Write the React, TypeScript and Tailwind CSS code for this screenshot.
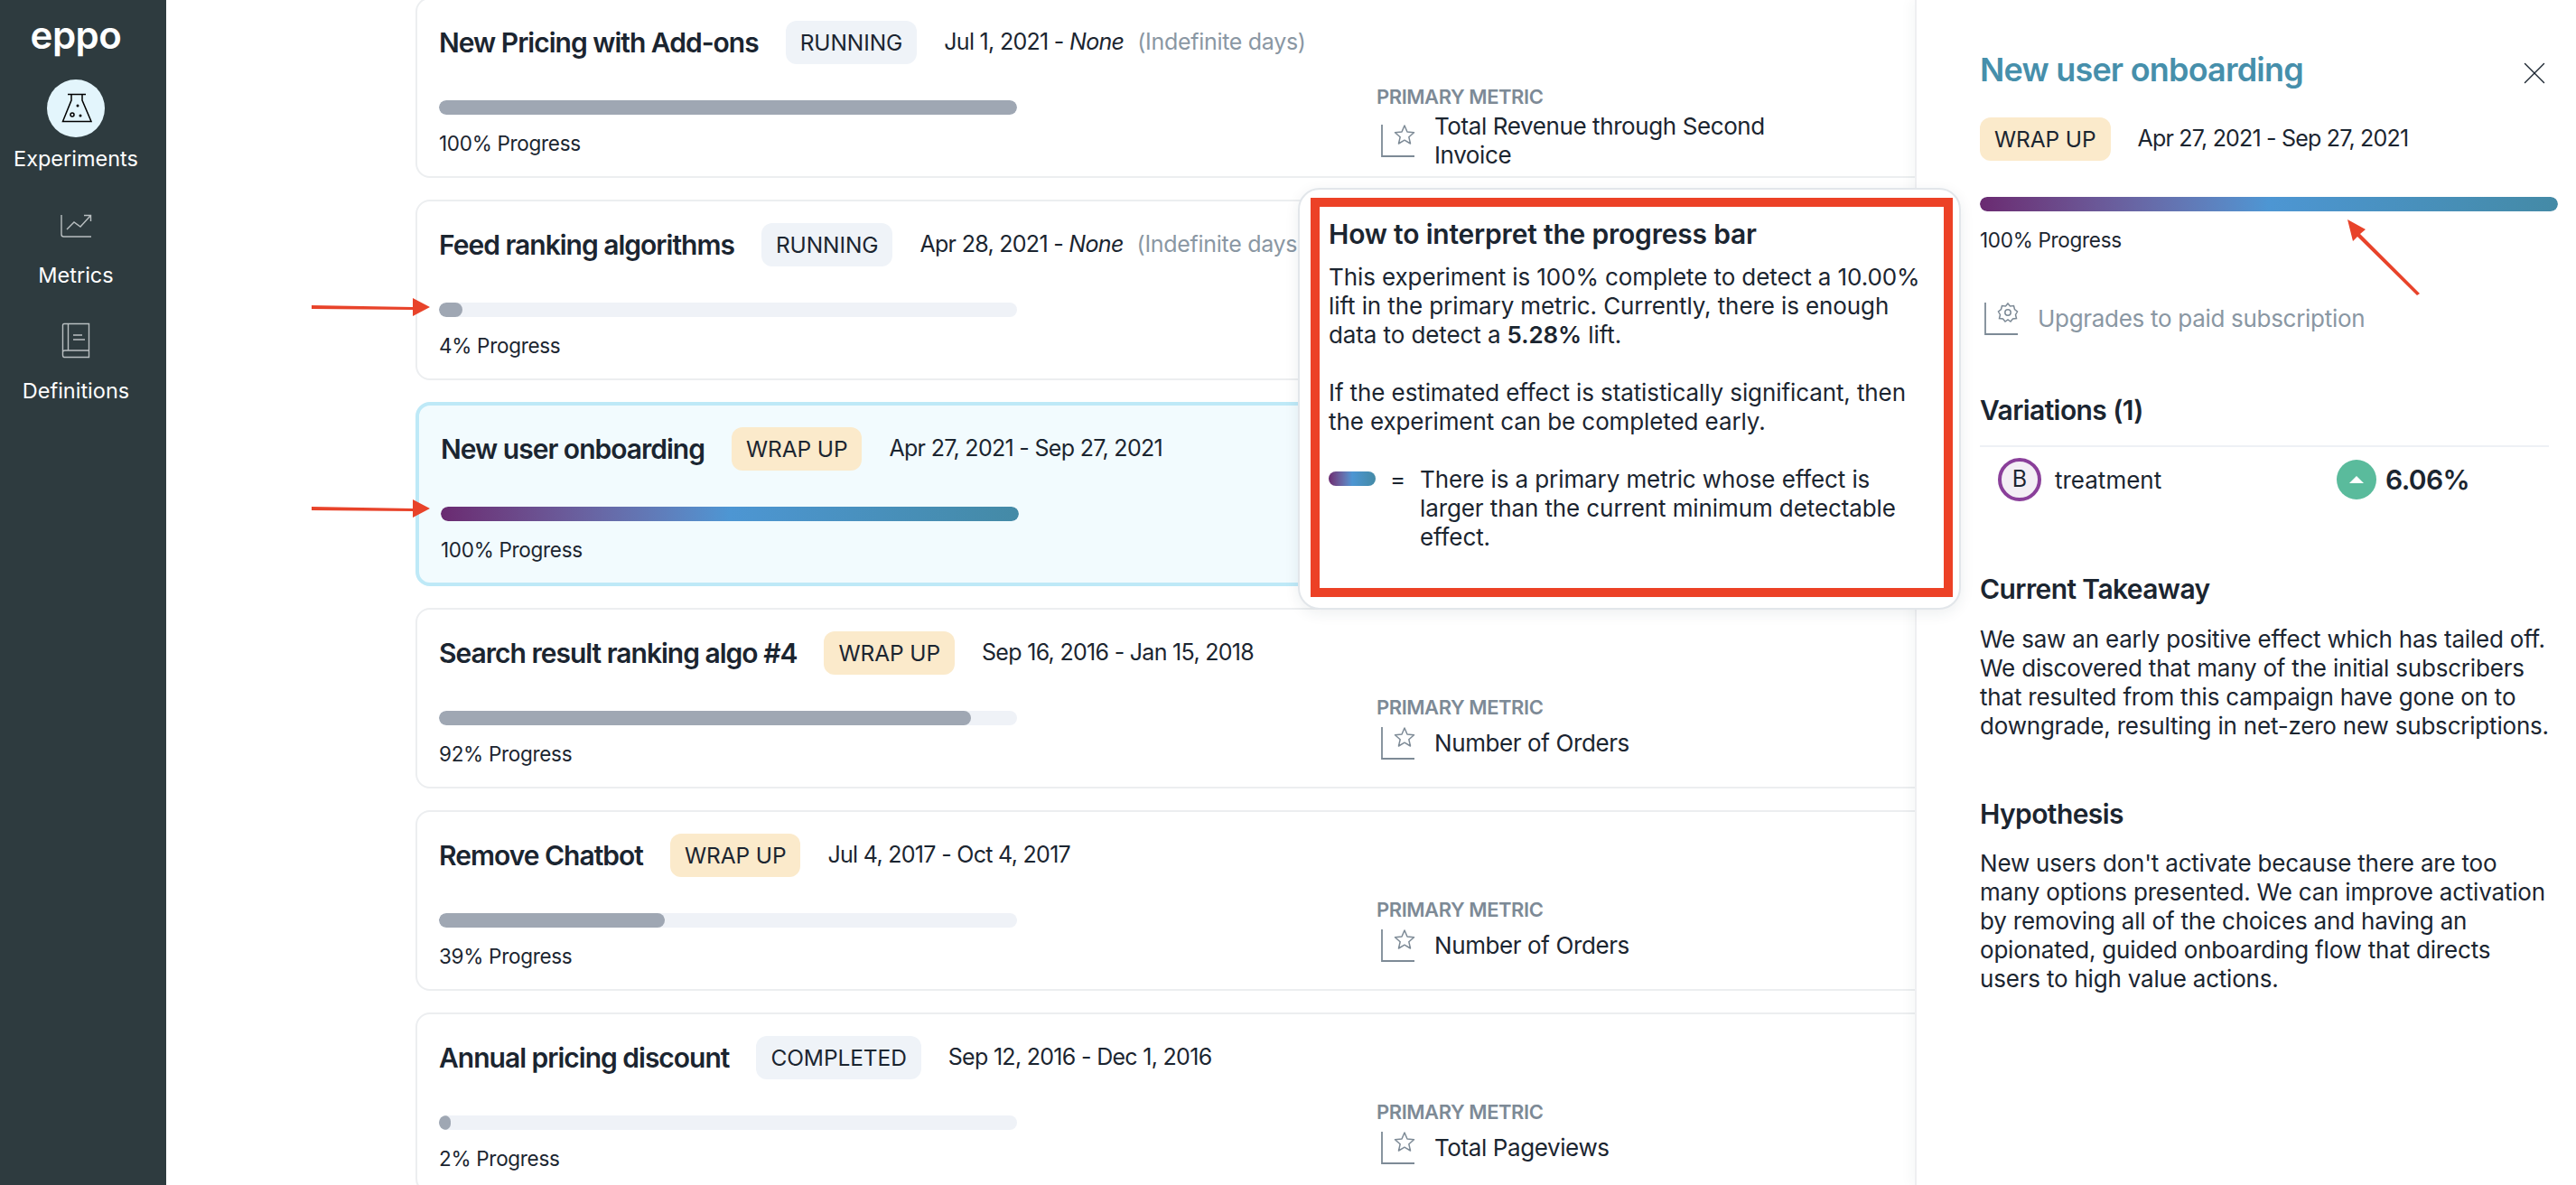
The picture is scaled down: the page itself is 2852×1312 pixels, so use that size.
import { X } from "lucide-react";

type Exp = {
  title: string;
  status: "RUNNING" | "WRAP UP" | "COMPLETED";
  start: string;
  end: string;
  progress: number;
  indefinite?: boolean;
  metric?: string;
  selected?: boolean;
};

const experiments: Exp[] = [
  { title: "New Pricing with Add-ons", status: "RUNNING", start: "Jul 1, 2021", end: "None", progress: 100, indefinite: true, metric: "Total Revenue through Second Invoice" },
  { title: "Feed ranking algorithms", status: "RUNNING", start: "Apr 28, 2021", end: "None", progress: 4, indefinite: true },
  { title: "New user onboarding", status: "WRAP UP", start: "Apr 27, 2021", end: "Sep 27, 2021", progress: 100, selected: true },
  { title: "Search result ranking algo #4", status: "WRAP UP", start: "Sep 16, 2016", end: "Jan 15, 2018", progress: 92, metric: "Number of Orders" },
  { title: "Remove Chatbot", status: "WRAP UP", start: "Jul 4, 2017", end: "Oct 4, 2017", progress: 39, metric: "Number of Orders" },
  { title: "Annual pricing discount", status: "COMPLETED", start: "Sep 12, 2016", end: "Dec 1, 2016", progress: 2, metric: "Total Pageviews" },
];

const StatusBadge = ({ status }: { status: Exp["status"] }) => (
  <span
    className={`flex h-12 shrink-0 items-center rounded-xl px-4 text-[24.500px] tracking-[-0.1px] ${
      status === "WRAP UP" ? "bg-[#fbeacb]" : "bg-[#eff3f8]"
    }`}
  >
    {status}
  </span>
);

const ProgressBar = ({ value, gradient }: { value: number; gradient?: boolean }) => (
  <div className="h-4 w-[640px] overflow-hidden rounded-lg bg-[#eff2f7]">
    <div
      className={`h-full rounded-lg ${
        gradient ? "bg-gradient-to-r from-[#6a2a71] via-[#4d96d3] to-[#448aa6]" : "bg-[#9fa7b3]"
      }`}
      style={{ width: `${value}%` }}
    />
  </div>
);

const MetricAxis = ({ gear }: { gear?: boolean }) => (
  <svg width="38" height="38" viewBox="0 0 38 38" fill="none" className="shrink-0 text-[#7d8a96]" stroke="currentColor">
    <path d="M1 1V36H37" strokeWidth="1.8" />
    {gear ? (
      <g strokeWidth="1.5">
        <circle cx="26" cy="12" r="3.2" />
        <path d="M26 2l2.500 3 4-.5 1 4 3 2.500-2 3.500 1 4-4 .5-2.500 3-3-2-3 2-2.500-3-4-.5 1-4-2-3.500 3-2.500 1-4 4 .5z" />
      </g>
    ) : (
      <path d="M26 2l3 7 7.500.7-5.700 5 1.700 7.300-6.500-3.800-6.500 3.800 1.700-7.300-5.700-5 7.500-.7z" strokeWidth="1.5" strokeLinejoin="round" />
    )}
  </svg>
);

const Card = ({ exp }: { exp: Exp }) => (
  <div
    className={`flex w-[1700px] shrink-0 rounded-2xl px-6 pt-6 ${
      exp.selected ? "h-[204px] border-4 border-[#bee9f7] bg-[#f2fbfe]" : "h-[200px] border-2 border-[#eceef0] bg-white"
    }`}
  >
    <div className={exp.selected ? "w-[1037px] shrink-0" : "w-[1038px] shrink-0"}>
      <div className="flex h-12 items-center whitespace-nowrap">
        <span className="mr-[30px] text-[30px] font-semibold tracking-[-1px]">{exp.title}</span>
        <StatusBadge status={exp.status} />
        <span className="ml-[30px] text-[25px] tracking-[-0.7px]">
          {exp.start} - {exp.end === "None" ? <em>{exp.end}</em> : exp.end}
        </span>
        {exp.indefinite && <span className="ml-[15px] text-[25px] tracking-[-0.3px] text-[#8a97a3]">(Indefinite days)</span>}
      </div>
      <div className="mt-10">
        <ProgressBar value={exp.progress} gradient={exp.selected} />
      </div>
      <div className="mt-4 text-[22.500px] leading-8 tracking-[-0.3px]">{exp.progress}% Progress</div>
    </div>
    {exp.metric && (
      <div className="mt-[72px] w-[450px]">
        <div className="text-[22px] leading-6 font-semibold tracking-[-0.45px] text-[#7d8a96]">PRIMARY METRIC</div>
        <div className={`flex items-center pl-[5px] ${exp.metric.length > 20 ? "mt-[5px]" : "mt-[9px]"}`}>
          <MetricAxis />
          <span className="ml-[21px] w-[400px] text-[26px] leading-8 tracking-[-0.4px]">{exp.metric}</span>
        </div>
      </div>
    )}
  </div>
);

const Sidebar = () => (
  <aside className="flex h-full w-[184px] shrink-0 flex-col items-center bg-[#2e3b3f] pr-4 text-white">
    <div className="mt-[11px] text-[42px] leading-[56px] font-semibold tracking-[-0.5px]">eppo</div>
    <div className="mt-[21px] flex h-16 w-16 items-center justify-center rounded-full bg-[#e3f5fc]">
      <svg width="64" height="64" viewBox="0 0 64 64" fill="none" stroke="#000" strokeWidth="1.500">
        <path d="M23 16.500H43M27 16.500V23L17.500 46.500H49L39 23V16.500" />
        <circle cx="34" cy="29" r="1.500" fill="#000" stroke="none" />
        <circle cx="28" cy="39" r="2" />
        <circle cx="37" cy="40" r="1.500" fill="#000" stroke="none" />
      </svg>
    </div>
    <div className="mt-2 text-[23.500px] leading-8">Experiments</div>
    <svg width="36" height="26" viewBox="0 0 36 26" fill="none" stroke="#b9bfc1" strokeWidth="1.4" className="mt-[45px]">
      <path d="M2 1V22.500Q2 25 4.500 25H35" />
      <path d="M8 17L16 9L23 14L34 2M27 1.500H34.500V8" />
    </svg>
    <div className="mt-[26px] text-[23.500px] leading-8">Metrics</div>
    <svg width="32" height="40" viewBox="0 0 32 40" fill="none" stroke="#b9bfc1" strokeWidth="1.4" className="mt-[36px]">
      <path d="M3 1.500H30.500V38.500H3Q1.500 38.500 1.500 36V3Q1.500 1.500 3 1.500ZM1.500 33Q1.500 31 4 31H30.500M7.500 1.500V31M13 14H23M13 19H26" />
    </svg>
    <div className="mt-[20px] text-[23.500px] leading-8">Definitions</div>
  </aside>
);

const Arrow = ({ className }: { className: string }) => (
  <svg width="132" height="22" viewBox="0 0 132 22" className={`absolute ${className}`}>
    <path d="M0 9L112 11V1L131 11L112 21V14L0 13z" fill="#e8432a" />
  </svg>
);

const Popover = () => (
  <div className="absolute top-[208px] left-[1437px] h-[467px] w-[734px] rounded-3xl border-2 border-[#e2e6ea] bg-white p-[9px] pl-[12px] shadow-[0_4px_16px_rgba(30,50,70,0.08)]">
    <div className="h-[442px] w-[711px] border-[10px] border-[#ec4126] px-[10px] pt-[12px] text-[26px] leading-8 tracking-[-0.1px]">
      <h3 className="text-[30px] leading-9 font-semibold tracking-[-0.2px]">How to interpret the progress bar</h3>
      <p className="mt-[14px]">
        This experiment is 100% complete to detect a 10.00% lift in the primary metric. Currently, there is enough data to detect a{" "}
        <strong className="font-semibold">5.28%</strong> lift.
      </p>
      <p className="mt-8">If the estimated effect is statistically significant, then the experiment can be completed early.</p>
      <div className="mt-8 flex">
        <div className="mt-[7px] h-4 w-[52px] shrink-0 rounded-lg bg-gradient-to-r from-[#6a2a71] via-[#4d96d3] to-[#448aa6]" />
        <span className="w-[49px] shrink-0 text-center">=</span>
        <span className="w-[540px]">There is a primary metric whose effect is larger than the current minimum detectable effect.</span>
      </div>
    </div>
  </div>
);

const DetailPanel = () => (
  <aside className="h-full w-[732px] shrink-0 border-l-2 border-[#eeeff1] bg-white pt-[54px] pr-[20px] pl-[70px] shadow-[-6px_0_12px_rgba(30,50,70,0.03)]">
    <div className="flex items-center justify-between pr-[5px]">
      <h2 className="text-[36px] leading-[46px] font-semibold tracking-[-0.8px] text-[#468fab]">New user onboarding</h2>
      <X size={42} strokeWidth={0.8} className="-my-2 mt-0" />
    </div>
    <div className="mt-[30px] flex items-center">
      <StatusBadge status="WRAP UP" />
      <span className="ml-[30px] text-[25px] tracking-[-0.8px]">Apr 27, 2021 - Sep 27, 2021</span>
    </div>
    <div className="mt-10">
      <ProgressBar value={100} gradient />
    </div>
    <div className="mt-4 text-[22.500px] leading-8 tracking-[-0.3px]">100% Progress</div>
    <div className="mt-[52px] flex items-center pl-[5px]">
      <MetricAxis gear />
      <span className="ml-[21px] text-[26px] leading-8 tracking-[-0.3px] text-[#8a97a3]">Upgrades to paid subscription</span>
    </div>
    <h3 className="mt-[62px] text-[30px] leading-10 font-semibold tracking-[-0.6px]">Variations (1)</h3>
    <div className="mt-[19px] flex w-[630px] items-center border-t-2 border-[#eef1f5] pt-[12px] pl-[20px]">
      <div className="flex h-12 w-12 items-center justify-center rounded-full border-[4px] border-[#8a3f9a] bg-[#f3eef5] text-[25px]">B</div>
      <span className="ml-[15px] w-[312px] text-[26px]">treatment</span>
      <div className="flex h-11 w-11 items-center justify-center rounded-full bg-[#5abb9c]">
        <div className="h-0 w-0 border-x-[8px] border-b-[8px] border-x-transparent border-b-white" />
      </div>
      <span className="ml-[10px] text-[30px] font-semibold tracking-[-0.6px]">6.06%</span>
    </div>
    <h3 className="mt-[77px] text-[30px] leading-10 font-semibold tracking-[-0.6px]">Current Takeaway</h3>
    <p className="mt-[20px] w-[640px] text-[26px] leading-8 tracking-[-0.2px]">
      We saw an early positive effect which has tailed off. We discovered that many of the initial subscribers that resulted from this campaign have gone on to downgrade, resulting in net-zero new subscriptions.
    </p>
    <h3 className="mt-[61px] text-[30px] leading-10 font-semibold tracking-[-0.6px]">Hypothesis</h3>
    <p className="mt-[19px] w-[632px] text-[26px] leading-8 tracking-[-0.2px]">
      New users don't activate because there are too many options presented. We can improve activation by removing all of the choices and having an opionated, guided onboarding flow that directs users to high value actions.
    </p>
  </aside>
);

export default function App() {
  return (
    <div className="relative flex h-[1312px] w-[2852px] overflow-hidden bg-white font-['Inter',sans-serif] text-[#1b2530]">
      <Sidebar />
      <main className="flex h-full min-w-0 flex-1 flex-col gap-6 overflow-hidden pl-[276px]">
        <div className="-mt-[3px] flex flex-col gap-6">
          {experiments.map((exp) => (
            <Card key={exp.title} exp={exp} />
          ))}
        </div>
      </main>
      <DetailPanel />
      <Popover />
      <Arrow className="top-[329px] left-[345px]" />
      <Arrow className="top-[552px] left-[345px]" />
      <svg width="90" height="92" viewBox="0 0 90 92" className="absolute top-[240px] left-[2595px]">
        <path d="M4 3L24 14L18 19L84 85L81 87L15 22L10 27z" fill="#e8432a" />
      </svg>
    </div>
  );
}
